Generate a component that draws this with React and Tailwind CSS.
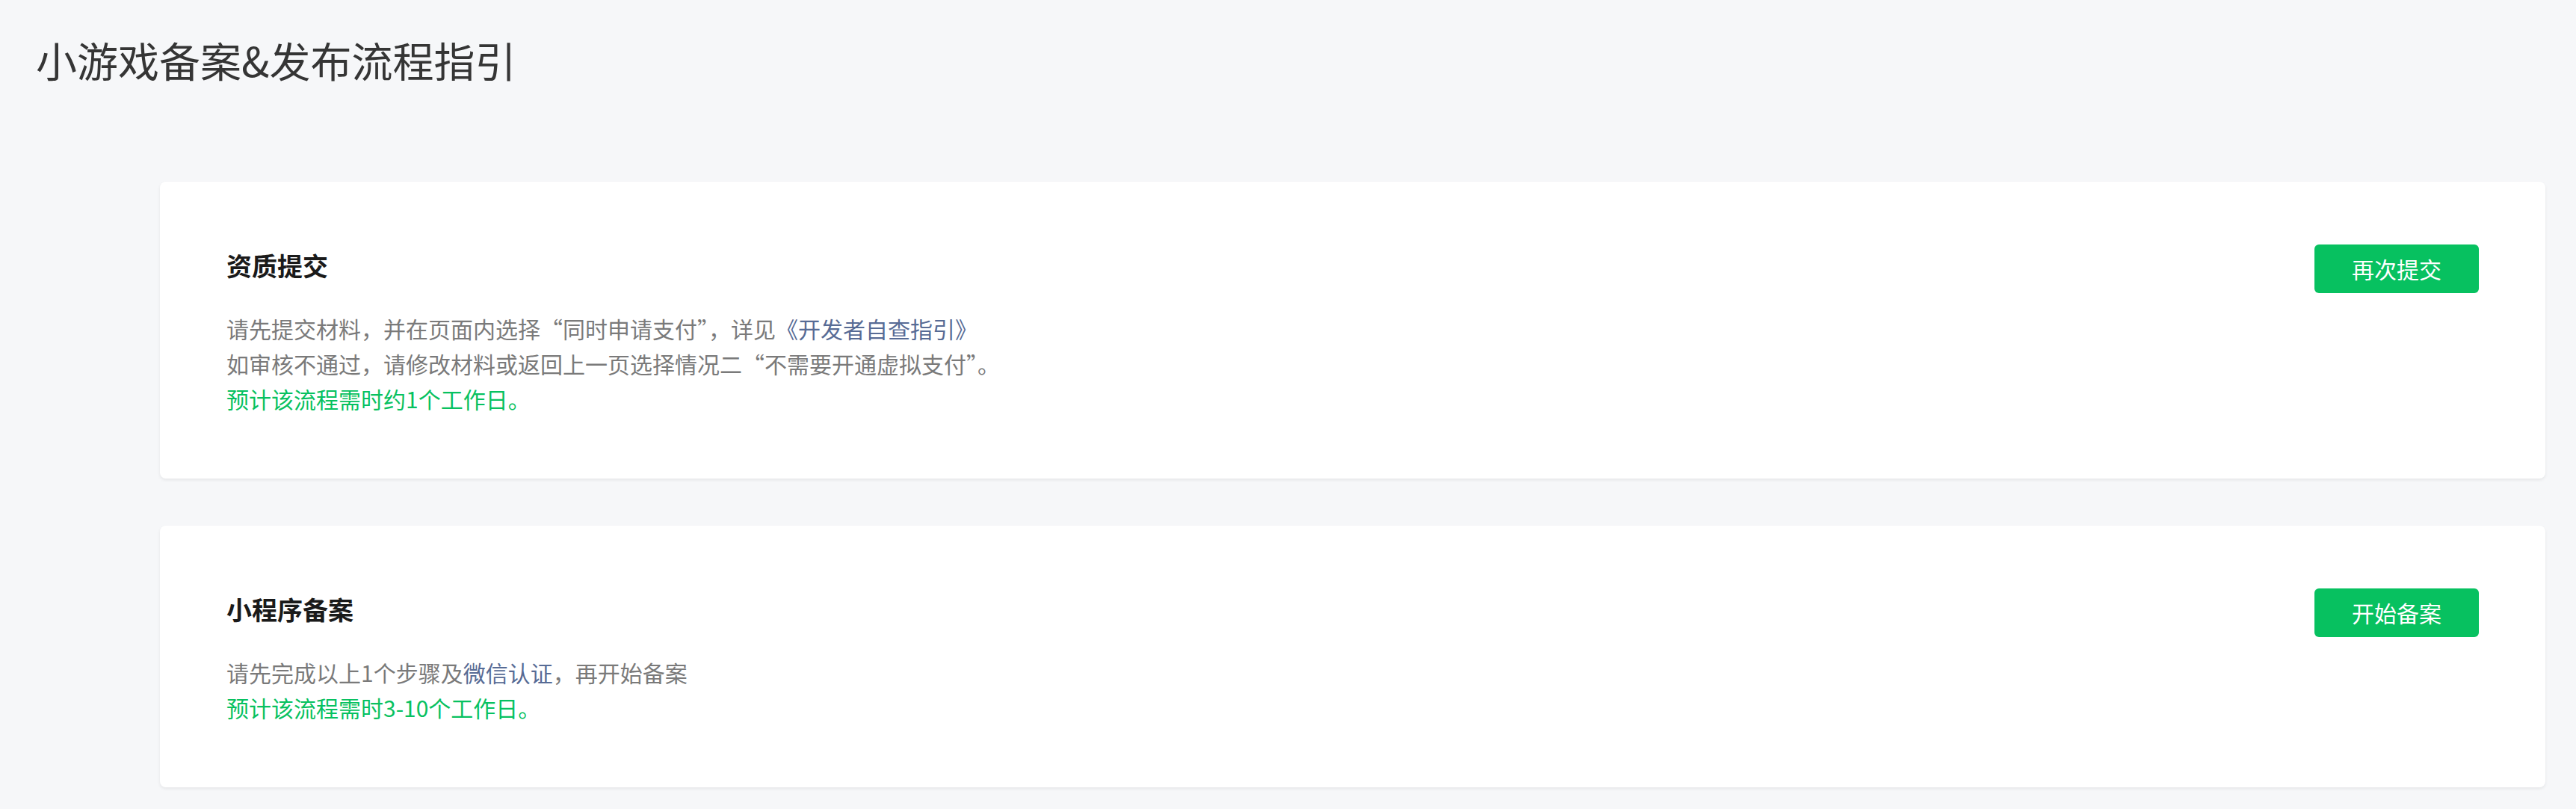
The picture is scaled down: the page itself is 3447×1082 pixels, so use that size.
import React from "react";

const steps = [
  {
    id: "qualification",
    title: "资质提交",
    action: "再次提交",
    lines: [
      <>
        请先提交材料，并在页面内选择“同时申请支付”，详见
        <a className="text-[#576b95]">《开发者自查指引》</a>
      </>,
      <>如审核不通过，请修改材料或返回上一页选择情况二“不需要开通虚拟支付”。</>,
    ],
    note: "预计该流程需时约1个工作日。",
  },
  {
    id: "filing",
    title: "小程序备案",
    action: "开始备案",
    lines: [
      <>
        请先完成以上1个步骤及<a className="text-[#576b95]">微信认证</a>，再开始备案
      </>,
    ],
    note: "预计该流程需时3-10个工作日。",
  },
];

function StepCard({ step }) {
  return (
    <div className="flex justify-between bg-white rounded-[8px] shadow-[0_2px_4px_rgba(0,0,0,0.07)] px-[89px] pt-[86px] pb-[83px]">
      <div>
        <h2 className="text-[34px] leading-[52px] font-bold text-[#1a1a1a]">{step.title}</h2>
        <div className="mt-[35px] text-[30px] leading-[47px] text-[#7a7a7a]">
          {step.lines.map((line, i) => (
            <p key={i}>{line}</p>
          ))}
          <p className="text-[#07c160]">{step.note}</p>
        </div>
      </div>
      <button className="-mt-[2px] w-[220px] h-[65px] shrink-0 rounded-[6px] bg-[#07c160] text-white text-[30px]">
        {step.action}
      </button>
    </div>
  );
}

export default function App() {
  return (
    <div className="min-h-screen bg-[#f6f7f9] font-['Noto_Sans_CJK_SC',sans-serif]">
      <h1 className="pt-[41px] pl-[48px] text-[55px] leading-[77px] font-normal text-[#353535]">
        小游戏备案&amp;发布流程指引
      </h1>
      <div className="flex flex-col gap-[63px] pl-[214px] pr-[41px] pt-[125px]">
        {steps.map((step) => (
          <StepCard key={step.id} step={step} />
        ))}
      </div>
    </div>
  );
}
